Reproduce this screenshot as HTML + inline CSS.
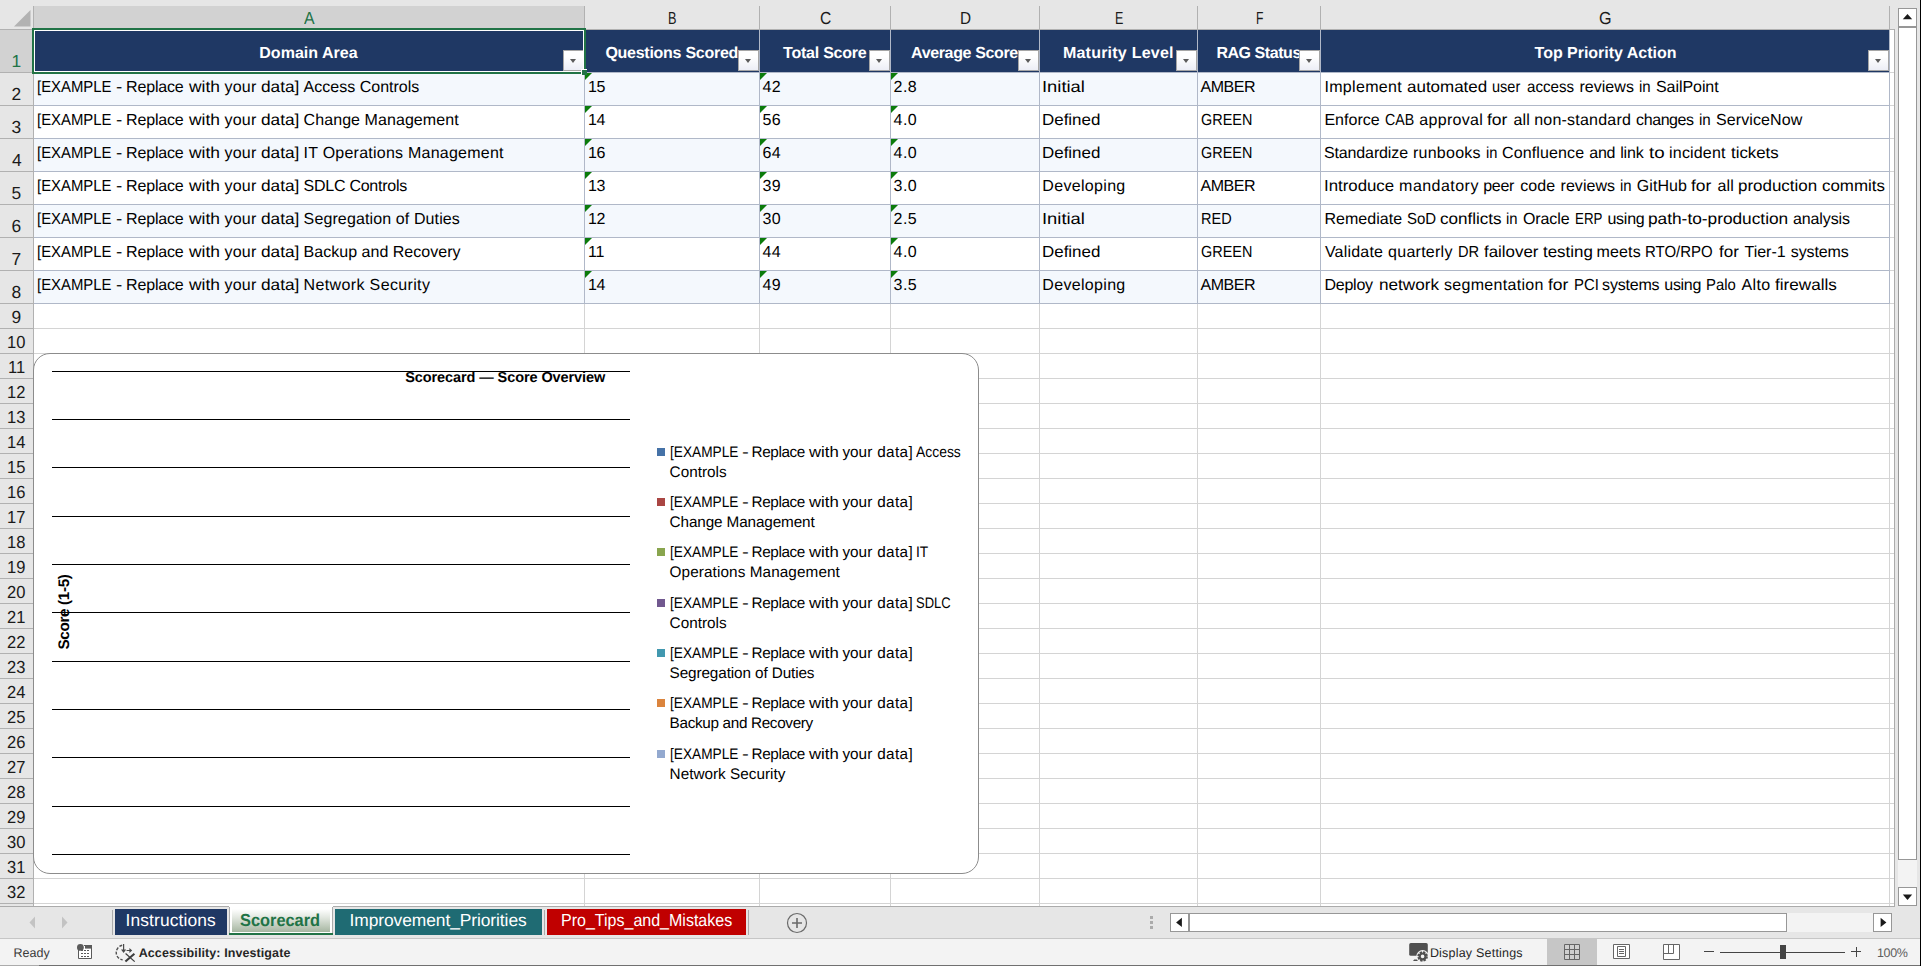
<!DOCTYPE html>
<html lang="en"><head><meta charset="utf-8"><title>Scorecard</title>
<style>
*{margin:0;padding:0}
html,body{width:1921px;height:966px;overflow:hidden;background:#fff}
body{position:relative;font-family:"Liberation Sans",sans-serif;color:#000;text-rendering:geometricPrecision}
.b{position:absolute}
.t{position:absolute;white-space:nowrap;line-height:20px;height:20px;transform-origin:0 50%}
.sb{position:absolute;background:#fff;border:1px solid #979797}
.fb{position:absolute;width:19px;height:19px;border:1px solid #a6a6a6;background:linear-gradient(#fff 30%,#eceef6)}
.fb i{position:absolute;left:6px;top:8px;border:3.5px solid transparent;border-top:4px solid #5c5c5c;border-bottom:0;width:0;height:0}
.tri{position:absolute;width:0;height:0;border-top:7px solid #0b7b0b;border-right:7px solid transparent}
</style></head>
<body>
<!-- sheet grid -->
<div class="b" style="left:0px;top:0px;width:1921px;height:30px;background:#e6e6e6;"></div>
<div class="b" style="left:0px;top:30px;width:34px;height:876px;background:#e6e6e6;"></div>
<div class="b" style="left:1895px;top:30px;width:26px;height:877px;background:#e6e6e6;"></div>
<div class="b" style="left:34px;top:6px;width:550px;height:23px;background:#d2d2d2;"></div>
<div class="b" style="left:0px;top:30px;width:33px;height:42px;background:#d2d2d2;"></div>
<div class="b" style="left:34px;top:72px;width:1860px;height:1px;background:#d4d4d4;"></div>
<div class="b" style="left:34px;top:105px;width:1860px;height:1px;background:#d4d4d4;"></div>
<div class="b" style="left:34px;top:138px;width:1860px;height:1px;background:#d4d4d4;"></div>
<div class="b" style="left:34px;top:171px;width:1860px;height:1px;background:#d4d4d4;"></div>
<div class="b" style="left:34px;top:204px;width:1860px;height:1px;background:#d4d4d4;"></div>
<div class="b" style="left:34px;top:237px;width:1860px;height:1px;background:#d4d4d4;"></div>
<div class="b" style="left:34px;top:270px;width:1860px;height:1px;background:#d4d4d4;"></div>
<div class="b" style="left:34px;top:303px;width:1860px;height:1px;background:#d4d4d4;"></div>
<div class="b" style="left:34px;top:328px;width:1860px;height:1px;background:#d4d4d4;"></div>
<div class="b" style="left:34px;top:353px;width:1860px;height:1px;background:#d4d4d4;"></div>
<div class="b" style="left:34px;top:378px;width:1860px;height:1px;background:#d4d4d4;"></div>
<div class="b" style="left:34px;top:403px;width:1860px;height:1px;background:#d4d4d4;"></div>
<div class="b" style="left:34px;top:428px;width:1860px;height:1px;background:#d4d4d4;"></div>
<div class="b" style="left:34px;top:453px;width:1860px;height:1px;background:#d4d4d4;"></div>
<div class="b" style="left:34px;top:478px;width:1860px;height:1px;background:#d4d4d4;"></div>
<div class="b" style="left:34px;top:503px;width:1860px;height:1px;background:#d4d4d4;"></div>
<div class="b" style="left:34px;top:528px;width:1860px;height:1px;background:#d4d4d4;"></div>
<div class="b" style="left:34px;top:553px;width:1860px;height:1px;background:#d4d4d4;"></div>
<div class="b" style="left:34px;top:578px;width:1860px;height:1px;background:#d4d4d4;"></div>
<div class="b" style="left:34px;top:603px;width:1860px;height:1px;background:#d4d4d4;"></div>
<div class="b" style="left:34px;top:628px;width:1860px;height:1px;background:#d4d4d4;"></div>
<div class="b" style="left:34px;top:653px;width:1860px;height:1px;background:#d4d4d4;"></div>
<div class="b" style="left:34px;top:678px;width:1860px;height:1px;background:#d4d4d4;"></div>
<div class="b" style="left:34px;top:703px;width:1860px;height:1px;background:#d4d4d4;"></div>
<div class="b" style="left:34px;top:728px;width:1860px;height:1px;background:#d4d4d4;"></div>
<div class="b" style="left:34px;top:753px;width:1860px;height:1px;background:#d4d4d4;"></div>
<div class="b" style="left:34px;top:778px;width:1860px;height:1px;background:#d4d4d4;"></div>
<div class="b" style="left:34px;top:803px;width:1860px;height:1px;background:#d4d4d4;"></div>
<div class="b" style="left:34px;top:828px;width:1860px;height:1px;background:#d4d4d4;"></div>
<div class="b" style="left:34px;top:853px;width:1860px;height:1px;background:#d4d4d4;"></div>
<div class="b" style="left:34px;top:878px;width:1860px;height:1px;background:#d4d4d4;"></div>
<div class="b" style="left:34px;top:903px;width:1860px;height:1px;background:#d4d4d4;"></div>
<div class="b" style="left:584px;top:30px;width:1px;height:876px;background:#d4d4d4;"></div>
<div class="b" style="left:759px;top:30px;width:1px;height:876px;background:#d4d4d4;"></div>
<div class="b" style="left:890px;top:30px;width:1px;height:876px;background:#d4d4d4;"></div>
<div class="b" style="left:1039px;top:30px;width:1px;height:876px;background:#d4d4d4;"></div>
<div class="b" style="left:1197px;top:30px;width:1px;height:876px;background:#d4d4d4;"></div>
<div class="b" style="left:1320px;top:30px;width:1px;height:876px;background:#d4d4d4;"></div>
<div class="b" style="left:1889px;top:30px;width:1px;height:876px;background:#d4d4d4;"></div>
<!-- table -->
<div class="b" style="left:34px;top:30px;width:1855px;height:42px;background:#1f3864;"></div>
<div class="b" style="left:34px;top:73px;width:1286px;height:32px;background:#f4f8fd;"></div>
<div class="b" style="left:34px;top:139px;width:1286px;height:32px;background:#f4f8fd;"></div>
<div class="b" style="left:34px;top:205px;width:1286px;height:32px;background:#f4f8fd;"></div>
<div class="b" style="left:34px;top:271px;width:1286px;height:32px;background:#f4f8fd;"></div>
<div class="b" style="left:34px;top:72px;width:1856px;height:1px;background:#b0b8c8;"></div>
<div class="b" style="left:34px;top:105px;width:1856px;height:1px;background:#b0b8c8;"></div>
<div class="b" style="left:34px;top:138px;width:1856px;height:1px;background:#b0b8c8;"></div>
<div class="b" style="left:34px;top:171px;width:1856px;height:1px;background:#b0b8c8;"></div>
<div class="b" style="left:34px;top:204px;width:1856px;height:1px;background:#b0b8c8;"></div>
<div class="b" style="left:34px;top:237px;width:1856px;height:1px;background:#b0b8c8;"></div>
<div class="b" style="left:34px;top:270px;width:1856px;height:1px;background:#b0b8c8;"></div>
<div class="b" style="left:34px;top:303px;width:1856px;height:1px;background:#b0b8c8;"></div>
<div class="b" style="left:584px;top:30px;width:1px;height:274px;background:#b0b8c8;"></div>
<div class="b" style="left:759px;top:30px;width:1px;height:274px;background:#b0b8c8;"></div>
<div class="b" style="left:890px;top:30px;width:1px;height:274px;background:#b0b8c8;"></div>
<div class="b" style="left:1039px;top:30px;width:1px;height:274px;background:#b0b8c8;"></div>
<div class="b" style="left:1197px;top:30px;width:1px;height:274px;background:#b0b8c8;"></div>
<div class="b" style="left:1320px;top:30px;width:1px;height:274px;background:#b0b8c8;"></div>
<div class="b" style="left:1889px;top:30px;width:1px;height:274px;background:#b0b8c8;"></div>
<div class="t" style="left:259.25px;top:44.00px;font-size:16px;color:#fff;font-weight:bold;letter-spacing:0.030px;">Domain Area</div>
<div class="t" style="left:605.40px;top:44.00px;font-size:16px;color:#fff;font-weight:bold;letter-spacing:-0.267px;">Questions Scored</div>
<div class="t" style="left:783.05px;top:44.00px;font-size:16px;color:#fff;font-weight:bold;letter-spacing:-0.230px;">Total Score</div>
<div class="t" style="left:911.10px;top:44.00px;font-size:16px;color:#fff;font-weight:bold;letter-spacing:-0.367px;">Average Score</div>
<div class="t" style="left:1062.90px;top:44.00px;font-size:16px;color:#fff;font-weight:bold;letter-spacing:0.231px;">Maturity Level</div>
<div class="t" style="left:1216.40px;top:44.00px;font-size:16px;color:#fff;font-weight:bold;letter-spacing:-0.444px;">RAG Status</div>
<div class="t" style="left:1534.60px;top:44.00px;font-size:16px;color:#fff;font-weight:bold;letter-spacing:-0.022px;">Top Priority Action</div>
<div class="fb" style="left:563px;top:50px"><i></i></div>
<div class="fb" style="left:738px;top:50px"><i></i></div>
<div class="fb" style="left:869px;top:50px"><i></i></div>
<div class="fb" style="left:1018px;top:50px"><i></i></div>
<div class="fb" style="left:1176px;top:50px"><i></i></div>
<div class="fb" style="left:1299px;top:50px"><i></i></div>
<div class="fb" style="left:1868px;top:50px"><i></i></div>
<div class="t" style="left:37.17px;top:78.00px;font-size:16px;transform:scaleX(0.9308);">[EXAMPLE</div>
<div class="t" style="left:115.53px;top:78.00px;font-size:16px;transform:scaleX(1.1750);">-</div>
<div class="t" style="left:126.10px;top:78.00px;font-size:16px;letter-spacing:-0.183px;">Replace</div>
<div class="t" style="left:188.50px;top:78.00px;font-size:16px;transform:scaleX(1.0893);">with</div>
<div class="t" style="left:224.50px;top:78.00px;font-size:16px;letter-spacing:0.200px;">your</div>
<div class="t" style="left:260.52px;top:78.00px;font-size:16px;transform:scaleX(1.0794);">data]</div>
<div class="t" style="left:303.60px;top:78.00px;font-size:16px;letter-spacing:0.011px;">Access Controls</div>
<div class="t" style="left:588.00px;top:78.00px;font-size:16px;letter-spacing:-0.300px;">15</div>
<div class="t" style="left:762.40px;top:78.00px;font-size:16px;letter-spacing:0.450px;">42</div>
<div class="t" style="left:893.60px;top:78.00px;font-size:16px;letter-spacing:0.450px;">2.8</div>
<div class="t" style="left:1042.30px;top:78.00px;font-size:16px;transform:scaleX(1.1486);">Initial</div>
<div class="t" style="left:1200.60px;top:78.00px;font-size:16px;letter-spacing:-0.500px;">AMBER</div>
<div class="t" style="left:1324.38px;top:78.00px;font-size:16px;letter-spacing:0.327px;">Implement</div>
<div class="t" style="left:1407.24px;top:78.00px;font-size:16px;transform:scaleX(1.0608);">automated</div>
<div class="t" style="left:1492.39px;top:78.00px;font-size:16px;transform:scaleX(0.9067);">user</div>
<div class="t" style="left:1527.45px;top:78.00px;font-size:16px;transform:scaleX(0.9458);">access</div>
<div class="t" style="left:1579.40px;top:78.00px;font-size:16px;letter-spacing:0.050px;">reviews</div>
<div class="t" style="left:1639.46px;top:78.00px;font-size:16px;transform:scaleX(0.9364);">in</div>
<div class="t" style="left:1656.00px;top:78.00px;font-size:16px;letter-spacing:-0.062px;">SailPoint</div>
<div class="tri" style="left:585px;top:73px"></div>
<div class="tri" style="left:760px;top:73px"></div>
<div class="tri" style="left:891px;top:73px"></div>
<div class="t" style="left:37.17px;top:111.00px;font-size:16px;transform:scaleX(0.9308);">[EXAMPLE</div>
<div class="t" style="left:115.53px;top:111.00px;font-size:16px;transform:scaleX(1.1750);">-</div>
<div class="t" style="left:126.10px;top:111.00px;font-size:16px;letter-spacing:-0.183px;">Replace</div>
<div class="t" style="left:188.50px;top:111.00px;font-size:16px;transform:scaleX(1.0893);">with</div>
<div class="t" style="left:224.50px;top:111.00px;font-size:16px;letter-spacing:0.200px;">your</div>
<div class="t" style="left:260.52px;top:111.00px;font-size:16px;transform:scaleX(1.0794);">data]</div>
<div class="t" style="left:303.60px;top:111.00px;font-size:16px;letter-spacing:0.072px;">Change Management</div>
<div class="t" style="left:588.00px;top:111.00px;font-size:16px;letter-spacing:-0.300px;">14</div>
<div class="t" style="left:762.40px;top:111.00px;font-size:16px;letter-spacing:0.450px;">56</div>
<div class="t" style="left:893.60px;top:111.00px;font-size:16px;letter-spacing:0.450px;">4.0</div>
<div class="t" style="left:1042.30px;top:111.00px;font-size:16px;transform:scaleX(1.0585);">Defined</div>
<div class="t" style="left:1200.60px;top:111.00px;font-size:16px;transform:scaleX(0.9018);">GREEN</div>
<div class="t" style="left:1324.40px;top:111.00px;font-size:16px;letter-spacing:0.033px;">Enforce</div>
<div class="t" style="left:1385.21px;top:111.00px;font-size:16px;transform:scaleX(0.8871);">CAB</div>
<div class="t" style="left:1419.30px;top:111.00px;font-size:16px;letter-spacing:0.314px;">approval</div>
<div class="t" style="left:1487.21px;top:111.00px;font-size:16px;transform:scaleX(1.0941);">for</div>
<div class="t" style="left:1513.40px;top:111.00px;font-size:16px;letter-spacing:0.200px;">all</div>
<div class="t" style="left:1534.20px;top:111.00px;font-size:16px;letter-spacing:0.218px;">non-standard</div>
<div class="t" style="left:1636.10px;top:111.00px;font-size:16px;letter-spacing:-0.417px;">changes</div>
<div class="t" style="left:1699.35px;top:111.00px;font-size:16px;transform:scaleX(0.9455);">in</div>
<div class="t" style="left:1715.90px;top:111.00px;font-size:16px;letter-spacing:0.122px;">ServiceNow</div>
<div class="tri" style="left:585px;top:106px"></div>
<div class="tri" style="left:760px;top:106px"></div>
<div class="tri" style="left:891px;top:106px"></div>
<div class="t" style="left:37.17px;top:144.00px;font-size:16px;transform:scaleX(0.9308);">[EXAMPLE</div>
<div class="t" style="left:115.53px;top:144.00px;font-size:16px;transform:scaleX(1.1750);">-</div>
<div class="t" style="left:126.10px;top:144.00px;font-size:16px;letter-spacing:-0.183px;">Replace</div>
<div class="t" style="left:188.50px;top:144.00px;font-size:16px;transform:scaleX(1.0893);">with</div>
<div class="t" style="left:224.50px;top:144.00px;font-size:16px;letter-spacing:0.200px;">your</div>
<div class="t" style="left:260.52px;top:144.00px;font-size:16px;transform:scaleX(1.0794);">data]</div>
<div class="t" style="left:303.60px;top:144.00px;font-size:16px;letter-spacing:0.235px;">IT Operations Management</div>
<div class="t" style="left:588.00px;top:144.00px;font-size:16px;letter-spacing:-0.300px;">16</div>
<div class="t" style="left:762.40px;top:144.00px;font-size:16px;letter-spacing:0.450px;">64</div>
<div class="t" style="left:893.60px;top:144.00px;font-size:16px;letter-spacing:0.450px;">4.0</div>
<div class="t" style="left:1042.30px;top:144.00px;font-size:16px;transform:scaleX(1.0585);">Defined</div>
<div class="t" style="left:1200.60px;top:144.00px;font-size:16px;transform:scaleX(0.9018);">GREEN</div>
<div class="t" style="left:1323.90px;top:144.00px;font-size:16px;letter-spacing:-0.120px;">Standardize</div>
<div class="t" style="left:1413.00px;top:144.00px;font-size:16px;letter-spacing:0.243px;">runbooks</div>
<div class="t" style="left:1485.58px;top:144.00px;font-size:16px;transform:scaleX(0.9182);">in</div>
<div class="t" style="left:1502.10px;top:144.00px;font-size:16px;letter-spacing:0.111px;">Confluence</div>
<div class="t" style="left:1589.30px;top:144.00px;font-size:16px;letter-spacing:-0.250px;">and</div>
<div class="t" style="left:1620.20px;top:144.00px;font-size:16px;letter-spacing:-0.133px;">link</div>
<div class="t" style="left:1648.73px;top:144.00px;font-size:16px;transform:scaleX(1.1667);">to</div>
<div class="t" style="left:1669.10px;top:144.00px;font-size:16px;letter-spacing:0.171px;">incident</div>
<div class="t" style="left:1730.95px;top:144.00px;font-size:16px;transform:scaleX(1.0523);">tickets</div>
<div class="tri" style="left:585px;top:139px"></div>
<div class="tri" style="left:760px;top:139px"></div>
<div class="tri" style="left:891px;top:139px"></div>
<div class="t" style="left:37.17px;top:177.00px;font-size:16px;transform:scaleX(0.9308);">[EXAMPLE</div>
<div class="t" style="left:115.53px;top:177.00px;font-size:16px;transform:scaleX(1.1750);">-</div>
<div class="t" style="left:126.10px;top:177.00px;font-size:16px;letter-spacing:-0.183px;">Replace</div>
<div class="t" style="left:188.50px;top:177.00px;font-size:16px;transform:scaleX(1.0893);">with</div>
<div class="t" style="left:224.50px;top:177.00px;font-size:16px;letter-spacing:0.200px;">your</div>
<div class="t" style="left:260.52px;top:177.00px;font-size:16px;transform:scaleX(1.0794);">data]</div>
<div class="t" style="left:303.60px;top:177.00px;font-size:16px;letter-spacing:-0.258px;">SDLC Controls</div>
<div class="t" style="left:588.00px;top:177.00px;font-size:16px;letter-spacing:-0.300px;">13</div>
<div class="t" style="left:762.40px;top:177.00px;font-size:16px;letter-spacing:0.450px;">39</div>
<div class="t" style="left:893.60px;top:177.00px;font-size:16px;letter-spacing:0.450px;">3.0</div>
<div class="t" style="left:1042.30px;top:177.00px;font-size:16px;letter-spacing:0.322px;">Developing</div>
<div class="t" style="left:1200.60px;top:177.00px;font-size:16px;letter-spacing:-0.500px;">AMBER</div>
<div class="t" style="left:1324.35px;top:177.00px;font-size:16px;transform:scaleX(1.0508);">Introduce</div>
<div class="t" style="left:1399.10px;top:177.00px;font-size:16px;letter-spacing:0.462px;">mandatory</div>
<div class="t" style="left:1483.20px;top:177.00px;font-size:16px;letter-spacing:-0.267px;">peer</div>
<div class="t" style="left:1520.20px;top:177.00px;font-size:16px;letter-spacing:0.100px;">code</div>
<div class="t" style="left:1560.50px;top:177.00px;font-size:16px;letter-spacing:0.050px;">reviews</div>
<div class="t" style="left:1620.27px;top:177.00px;font-size:16px;transform:scaleX(0.9273);">in</div>
<div class="t" style="left:1636.80px;top:177.00px;font-size:16px;letter-spacing:0.060px;">GitHub</div>
<div class="t" style="left:1691.41px;top:177.00px;font-size:16px;transform:scaleX(1.0882);">for</div>
<div class="t" style="left:1717.50px;top:177.00px;font-size:16px;letter-spacing:0.200px;">all</div>
<div class="t" style="left:1738.24px;top:177.00px;font-size:16px;transform:scaleX(1.0589);">production</div>
<div class="t" style="left:1822.04px;top:177.00px;font-size:16px;transform:scaleX(1.0552);">commits</div>
<div class="tri" style="left:585px;top:172px"></div>
<div class="tri" style="left:760px;top:172px"></div>
<div class="tri" style="left:891px;top:172px"></div>
<div class="t" style="left:37.17px;top:210.00px;font-size:16px;transform:scaleX(0.9308);">[EXAMPLE</div>
<div class="t" style="left:115.53px;top:210.00px;font-size:16px;transform:scaleX(1.1750);">-</div>
<div class="t" style="left:126.10px;top:210.00px;font-size:16px;letter-spacing:-0.183px;">Replace</div>
<div class="t" style="left:188.50px;top:210.00px;font-size:16px;transform:scaleX(1.0893);">with</div>
<div class="t" style="left:224.50px;top:210.00px;font-size:16px;letter-spacing:0.200px;">your</div>
<div class="t" style="left:260.52px;top:210.00px;font-size:16px;transform:scaleX(1.0794);">data]</div>
<div class="t" style="left:303.60px;top:210.00px;font-size:16px;letter-spacing:0.120px;">Segregation of Duties</div>
<div class="t" style="left:588.00px;top:210.00px;font-size:16px;letter-spacing:-0.300px;">12</div>
<div class="t" style="left:762.40px;top:210.00px;font-size:16px;letter-spacing:0.450px;">30</div>
<div class="t" style="left:893.60px;top:210.00px;font-size:16px;letter-spacing:0.450px;">2.5</div>
<div class="t" style="left:1042.30px;top:210.00px;font-size:16px;transform:scaleX(1.1486);">Initial</div>
<div class="t" style="left:1200.60px;top:210.00px;font-size:16px;transform:scaleX(0.9062);">RED</div>
<div class="t" style="left:1324.40px;top:210.00px;font-size:16px;letter-spacing:0.037px;">Remediate</div>
<div class="t" style="left:1407.06px;top:210.00px;font-size:16px;transform:scaleX(0.9379);">SoD</div>
<div class="t" style="left:1440.13px;top:210.00px;font-size:16px;transform:scaleX(1.0661);">conflicts</div>
<div class="t" style="left:1506.37px;top:210.00px;font-size:16px;transform:scaleX(0.9273);">in</div>
<div class="t" style="left:1522.90px;top:210.00px;font-size:16px;letter-spacing:-0.080px;">Oracle</div>
<div class="t" style="left:1575.17px;top:210.00px;font-size:16px;transform:scaleX(0.8323);">ERP</div>
<div class="t" style="left:1607.40px;top:210.00px;font-size:16px;letter-spacing:-0.225px;">using</div>
<div class="t" style="left:1648.42px;top:210.00px;font-size:16px;transform:scaleX(1.0797);">path-to-production</div>
<div class="t" style="left:1793.10px;top:210.00px;font-size:16px;letter-spacing:-0.143px;">analysis</div>
<div class="tri" style="left:585px;top:205px"></div>
<div class="tri" style="left:760px;top:205px"></div>
<div class="tri" style="left:891px;top:205px"></div>
<div class="t" style="left:37.17px;top:243.00px;font-size:16px;transform:scaleX(0.9308);">[EXAMPLE</div>
<div class="t" style="left:115.53px;top:243.00px;font-size:16px;transform:scaleX(1.1750);">-</div>
<div class="t" style="left:126.10px;top:243.00px;font-size:16px;letter-spacing:-0.183px;">Replace</div>
<div class="t" style="left:188.50px;top:243.00px;font-size:16px;transform:scaleX(1.0893);">with</div>
<div class="t" style="left:224.50px;top:243.00px;font-size:16px;letter-spacing:0.200px;">your</div>
<div class="t" style="left:260.52px;top:243.00px;font-size:16px;transform:scaleX(1.0794);">data]</div>
<div class="t" style="left:303.60px;top:243.00px;font-size:16px;letter-spacing:0.022px;">Backup and Recovery</div>
<div class="t" style="left:588.00px;top:243.00px;font-size:16px;letter-spacing:-0.300px;">11</div>
<div class="t" style="left:762.40px;top:243.00px;font-size:16px;letter-spacing:0.450px;">44</div>
<div class="t" style="left:893.60px;top:243.00px;font-size:16px;letter-spacing:0.450px;">4.0</div>
<div class="t" style="left:1042.30px;top:243.00px;font-size:16px;transform:scaleX(1.0585);">Defined</div>
<div class="t" style="left:1200.60px;top:243.00px;font-size:16px;transform:scaleX(0.9018);">GREEN</div>
<div class="t" style="left:1324.90px;top:243.00px;font-size:16px;letter-spacing:0.214px;">Validate</div>
<div class="t" style="left:1388.10px;top:243.00px;font-size:16px;letter-spacing:0.262px;">quarterly</div>
<div class="t" style="left:1458.09px;top:243.00px;font-size:16px;transform:scaleX(0.9143);">DR</div>
<div class="t" style="left:1483.64px;top:243.00px;font-size:16px;transform:scaleX(1.0560);">failover</div>
<div class="t" style="left:1542.74px;top:243.00px;font-size:16px;transform:scaleX(1.0578);">testing</div>
<div class="t" style="left:1596.40px;top:243.00px;font-size:16px;letter-spacing:0.200px;">meets</div>
<div class="t" style="left:1645.46px;top:243.00px;font-size:16px;transform:scaleX(0.9366);">RTO/RPO</div>
<div class="t" style="left:1718.64px;top:243.00px;font-size:16px;transform:scaleX(1.0647);">for</div>
<div class="t" style="left:1744.60px;top:243.00px;font-size:16px;letter-spacing:-0.040px;">Tier-1</div>
<div class="t" style="left:1790.80px;top:243.00px;font-size:16px;letter-spacing:-0.133px;">systems</div>
<div class="tri" style="left:585px;top:238px"></div>
<div class="tri" style="left:760px;top:238px"></div>
<div class="tri" style="left:891px;top:238px"></div>
<div class="t" style="left:37.17px;top:276.00px;font-size:16px;transform:scaleX(0.9308);">[EXAMPLE</div>
<div class="t" style="left:115.53px;top:276.00px;font-size:16px;transform:scaleX(1.1750);">-</div>
<div class="t" style="left:126.10px;top:276.00px;font-size:16px;letter-spacing:-0.183px;">Replace</div>
<div class="t" style="left:188.50px;top:276.00px;font-size:16px;transform:scaleX(1.0893);">with</div>
<div class="t" style="left:224.50px;top:276.00px;font-size:16px;letter-spacing:0.200px;">your</div>
<div class="t" style="left:260.52px;top:276.00px;font-size:16px;transform:scaleX(1.0794);">data]</div>
<div class="t" style="left:303.60px;top:276.00px;font-size:16px;letter-spacing:0.360px;">Network Security</div>
<div class="t" style="left:588.00px;top:276.00px;font-size:16px;letter-spacing:-0.300px;">14</div>
<div class="t" style="left:762.40px;top:276.00px;font-size:16px;letter-spacing:0.450px;">49</div>
<div class="t" style="left:893.60px;top:276.00px;font-size:16px;letter-spacing:0.450px;">3.5</div>
<div class="t" style="left:1042.30px;top:276.00px;font-size:16px;letter-spacing:0.322px;">Developing</div>
<div class="t" style="left:1200.60px;top:276.00px;font-size:16px;letter-spacing:-0.500px;">AMBER</div>
<div class="t" style="left:1324.40px;top:276.00px;font-size:16px;letter-spacing:-0.220px;">Deploy</div>
<div class="t" style="left:1378.93px;top:276.00px;font-size:16px;transform:scaleX(1.0727);">network</div>
<div class="t" style="left:1443.90px;top:276.00px;font-size:16px;letter-spacing:0.318px;">segmentation</div>
<div class="t" style="left:1548.01px;top:276.00px;font-size:16px;transform:scaleX(1.0941);">for</div>
<div class="t" style="left:1574.27px;top:276.00px;font-size:16px;transform:scaleX(0.9292);">PCI</div>
<div class="t" style="left:1602.10px;top:276.00px;font-size:16px;letter-spacing:-0.200px;">systems</div>
<div class="t" style="left:1664.30px;top:276.00px;font-size:16px;letter-spacing:-0.300px;">using</div>
<div class="t" style="left:1705.87px;top:276.00px;font-size:16px;transform:scaleX(0.9290);">Palo</div>
<div class="t" style="left:1741.60px;top:276.00px;font-size:16px;letter-spacing:0.300px;">Alto</div>
<div class="t" style="left:1774.93px;top:276.00px;font-size:16px;transform:scaleX(1.0714);">firewalls</div>
<div class="tri" style="left:585px;top:271px"></div>
<div class="tri" style="left:760px;top:271px"></div>
<div class="tri" style="left:891px;top:271px"></div>
<!-- headers -->
<div class="t" style="left:304.05px;top:8.00px;font-size:17.4px;color:#217346;transform:scaleX(0.9125);">A</div>
<div class="t" style="left:667.67px;top:8.00px;font-size:17.4px;color:#1a1a1a;transform:scaleX(0.7300);">B</div>
<div class="t" style="left:819.70px;top:8.00px;font-size:17.4px;color:#1a1a1a;transform:scaleX(0.9000);">C</div>
<div class="t" style="left:959.52px;top:8.00px;font-size:17.4px;color:#1a1a1a;transform:scaleX(0.8818);">D</div>
<div class="t" style="left:1114.58px;top:8.00px;font-size:17.4px;color:#1a1a1a;transform:scaleX(0.7200);">E</div>
<div class="t" style="left:1255.60px;top:8.00px;font-size:17.4px;color:#1a1a1a;transform:scaleX(0.7000);">F</div>
<div class="t" style="left:1598.97px;top:8.00px;font-size:17.4px;color:#1a1a1a;transform:scaleX(0.9273);">G</div>
<div class="b" style="left:33px;top:6px;width:1px;height:24px;background:#b1b1b1;"></div>
<div class="b" style="left:584px;top:6px;width:1px;height:24px;background:#b1b1b1;"></div>
<div class="b" style="left:759px;top:6px;width:1px;height:24px;background:#b1b1b1;"></div>
<div class="b" style="left:890px;top:6px;width:1px;height:24px;background:#b1b1b1;"></div>
<div class="b" style="left:1039px;top:6px;width:1px;height:24px;background:#b1b1b1;"></div>
<div class="b" style="left:1197px;top:6px;width:1px;height:24px;background:#b1b1b1;"></div>
<div class="b" style="left:1320px;top:6px;width:1px;height:24px;background:#b1b1b1;"></div>
<div class="b" style="left:1889px;top:6px;width:1px;height:24px;background:#b1b1b1;"></div>
<div class="b" style="left:0px;top:29px;width:1895px;height:1px;background:#b1b1b1;"></div>
<div class="b" style="left:33px;top:30px;width:1px;height:876px;background:#b1b1b1;"></div>
<div class="b" style="left:0px;top:72px;width:33px;height:1px;background:#b1b1b1;"></div>
<div class="t" style="left:11.50px;top:51.00px;font-size:17.4px;color:#217346;">1</div>
<div class="b" style="left:0px;top:105px;width:33px;height:1px;background:#b1b1b1;"></div>
<div class="t" style="left:11.50px;top:84.00px;font-size:17.4px;color:#1a1a1a;">2</div>
<div class="b" style="left:0px;top:138px;width:33px;height:1px;background:#b1b1b1;"></div>
<div class="t" style="left:11.50px;top:117.00px;font-size:17.4px;color:#1a1a1a;">3</div>
<div class="b" style="left:0px;top:171px;width:33px;height:1px;background:#b1b1b1;"></div>
<div class="t" style="left:12.00px;top:150.00px;font-size:17.4px;color:#1a1a1a;">4</div>
<div class="b" style="left:0px;top:204px;width:33px;height:1px;background:#b1b1b1;"></div>
<div class="t" style="left:11.50px;top:183.00px;font-size:17.4px;color:#1a1a1a;">5</div>
<div class="b" style="left:0px;top:237px;width:33px;height:1px;background:#b1b1b1;"></div>
<div class="t" style="left:11.50px;top:216.00px;font-size:17.4px;color:#1a1a1a;">6</div>
<div class="b" style="left:0px;top:270px;width:33px;height:1px;background:#b1b1b1;"></div>
<div class="t" style="left:11.50px;top:249.00px;font-size:17.4px;color:#1a1a1a;">7</div>
<div class="b" style="left:0px;top:303px;width:33px;height:1px;background:#b1b1b1;"></div>
<div class="t" style="left:11.50px;top:282.00px;font-size:17.4px;color:#1a1a1a;">8</div>
<div class="b" style="left:0px;top:328px;width:33px;height:1px;background:#b1b1b1;"></div>
<div class="t" style="left:11.50px;top:307.00px;font-size:17.4px;color:#1a1a1a;">9</div>
<div class="b" style="left:0px;top:353px;width:33px;height:1px;background:#b1b1b1;"></div>
<div class="t" style="left:7.35px;top:332.00px;font-size:17.4px;color:#1a1a1a;transform:scaleX(0.9500);">10</div>
<div class="b" style="left:0px;top:378px;width:33px;height:1px;background:#b1b1b1;"></div>
<div class="t" style="left:7.83px;top:357.00px;font-size:17.4px;color:#1a1a1a;transform:scaleX(0.9500);">11</div>
<div class="b" style="left:0px;top:403px;width:33px;height:1px;background:#b1b1b1;"></div>
<div class="t" style="left:7.35px;top:382.00px;font-size:17.4px;color:#1a1a1a;transform:scaleX(0.9500);">12</div>
<div class="b" style="left:0px;top:428px;width:33px;height:1px;background:#b1b1b1;"></div>
<div class="t" style="left:7.35px;top:407.00px;font-size:17.4px;color:#1a1a1a;transform:scaleX(0.9500);">13</div>
<div class="b" style="left:0px;top:453px;width:33px;height:1px;background:#b1b1b1;"></div>
<div class="t" style="left:7.35px;top:432.00px;font-size:17.4px;color:#1a1a1a;transform:scaleX(0.9500);">14</div>
<div class="b" style="left:0px;top:478px;width:33px;height:1px;background:#b1b1b1;"></div>
<div class="t" style="left:7.35px;top:457.00px;font-size:17.4px;color:#1a1a1a;transform:scaleX(0.9500);">15</div>
<div class="b" style="left:0px;top:503px;width:33px;height:1px;background:#b1b1b1;"></div>
<div class="t" style="left:7.35px;top:482.00px;font-size:17.4px;color:#1a1a1a;transform:scaleX(0.9500);">16</div>
<div class="b" style="left:0px;top:528px;width:33px;height:1px;background:#b1b1b1;"></div>
<div class="t" style="left:7.35px;top:507.00px;font-size:17.4px;color:#1a1a1a;transform:scaleX(0.9500);">17</div>
<div class="b" style="left:0px;top:553px;width:33px;height:1px;background:#b1b1b1;"></div>
<div class="t" style="left:7.35px;top:532.00px;font-size:17.4px;color:#1a1a1a;transform:scaleX(0.9500);">18</div>
<div class="b" style="left:0px;top:578px;width:33px;height:1px;background:#b1b1b1;"></div>
<div class="t" style="left:7.35px;top:557.00px;font-size:17.4px;color:#1a1a1a;transform:scaleX(0.9500);">19</div>
<div class="b" style="left:0px;top:603px;width:33px;height:1px;background:#b1b1b1;"></div>
<div class="t" style="left:7.35px;top:582.00px;font-size:17.4px;color:#1a1a1a;transform:scaleX(0.9500);">20</div>
<div class="b" style="left:0px;top:628px;width:33px;height:1px;background:#b1b1b1;"></div>
<div class="t" style="left:7.35px;top:607.00px;font-size:17.4px;color:#1a1a1a;transform:scaleX(0.9500);">21</div>
<div class="b" style="left:0px;top:653px;width:33px;height:1px;background:#b1b1b1;"></div>
<div class="t" style="left:7.35px;top:632.00px;font-size:17.4px;color:#1a1a1a;transform:scaleX(0.9500);">22</div>
<div class="b" style="left:0px;top:678px;width:33px;height:1px;background:#b1b1b1;"></div>
<div class="t" style="left:7.35px;top:657.00px;font-size:17.4px;color:#1a1a1a;transform:scaleX(0.9500);">23</div>
<div class="b" style="left:0px;top:703px;width:33px;height:1px;background:#b1b1b1;"></div>
<div class="t" style="left:7.35px;top:682.00px;font-size:17.4px;color:#1a1a1a;transform:scaleX(0.9500);">24</div>
<div class="b" style="left:0px;top:728px;width:33px;height:1px;background:#b1b1b1;"></div>
<div class="t" style="left:7.35px;top:707.00px;font-size:17.4px;color:#1a1a1a;transform:scaleX(0.9500);">25</div>
<div class="b" style="left:0px;top:753px;width:33px;height:1px;background:#b1b1b1;"></div>
<div class="t" style="left:7.35px;top:732.00px;font-size:17.4px;color:#1a1a1a;transform:scaleX(0.9500);">26</div>
<div class="b" style="left:0px;top:778px;width:33px;height:1px;background:#b1b1b1;"></div>
<div class="t" style="left:7.35px;top:757.00px;font-size:17.4px;color:#1a1a1a;transform:scaleX(0.9500);">27</div>
<div class="b" style="left:0px;top:803px;width:33px;height:1px;background:#b1b1b1;"></div>
<div class="t" style="left:7.35px;top:782.00px;font-size:17.4px;color:#1a1a1a;transform:scaleX(0.9500);">28</div>
<div class="b" style="left:0px;top:828px;width:33px;height:1px;background:#b1b1b1;"></div>
<div class="t" style="left:7.35px;top:807.00px;font-size:17.4px;color:#1a1a1a;transform:scaleX(0.9500);">29</div>
<div class="b" style="left:0px;top:853px;width:33px;height:1px;background:#b1b1b1;"></div>
<div class="t" style="left:7.35px;top:832.00px;font-size:17.4px;color:#1a1a1a;transform:scaleX(0.9500);">30</div>
<div class="b" style="left:0px;top:878px;width:33px;height:1px;background:#b1b1b1;"></div>
<div class="t" style="left:7.35px;top:857.00px;font-size:17.4px;color:#1a1a1a;transform:scaleX(0.9500);">31</div>
<div class="b" style="left:0px;top:903px;width:33px;height:1px;background:#b1b1b1;"></div>
<div class="t" style="left:7.35px;top:882.00px;font-size:17.4px;color:#1a1a1a;transform:scaleX(0.9500);">32</div>
<svg class="b" style="left:14px;top:10px" width="17" height="17"><path d="M16.5 0V16.5H0Z" fill="#b2b2b2"/></svg>
<div class="b" style="left:1894px;top:29px;width:1px;height:877px;background:#ababab;"></div>
<div class="b" style="left:0px;top:906px;width:1895px;height:1px;background:#ababab;"></div>
<div class="b" style="left:32px;top:28px;width:550px;height:42px;border:2px solid #217346;"></div>
<div class="b" style="left:34px;top:30px;width:548px;height:40px;border:1px solid #fff;"></div>
<div class="b" style="left:581px;top:69px;width:6px;height:6px;background:#fff;"></div>
<div class="b" style="left:582px;top:70px;width:5px;height:5px;background:#217346;"></div>
<!-- chart -->
<div class="b" style="left:33px;top:353px;width:944px;height:519px;background:#fff;border:1px solid #8c8c8c;border-radius:17px;"></div>
<div class="b" style="left:52px;top:371px;width:578px;height:1px;background:#000;"></div>
<div class="b" style="left:52px;top:419px;width:578px;height:1px;background:#000;"></div>
<div class="b" style="left:52px;top:467px;width:578px;height:1px;background:#000;"></div>
<div class="b" style="left:52px;top:516px;width:578px;height:1px;background:#000;"></div>
<div class="b" style="left:52px;top:564px;width:578px;height:1px;background:#000;"></div>
<div class="b" style="left:52px;top:612px;width:578px;height:1px;background:#000;"></div>
<div class="b" style="left:52px;top:661px;width:578px;height:1px;background:#000;"></div>
<div class="b" style="left:52px;top:709px;width:578px;height:1px;background:#000;"></div>
<div class="b" style="left:52px;top:757px;width:578px;height:1px;background:#000;"></div>
<div class="b" style="left:52px;top:806px;width:578px;height:1px;background:#000;"></div>
<div class="b" style="left:52px;top:854px;width:578px;height:1px;background:#000;"></div>
<div class="t" style="left:405.20px;top:368.00px;font-size:14.5px;font-weight:bold;letter-spacing:-0.088px;">Scorecard — Score Overview</div>
<div class="t" style="left:0;top:0;font-size:15.3px;font-weight:bold;letter-spacing:-0.35px;transform-origin:0 0;transform:translate(64.5px,649.6px) rotate(-90deg);height:0;line-height:0">Score (1-5)</div>
<div class="b" style="left:657px;top:448px;width:8px;height:8px;background:#4572A7;"></div>
<div class="t" style="left:669.71px;top:443.00px;font-size:15.3px;transform:scaleX(0.8933);">[EXAMPLE</div>
<div class="t" style="left:741.77px;top:443.00px;font-size:15.3px;transform:scaleX(1.3333);">-</div>
<div class="t" style="left:751.60px;top:443.00px;font-size:15.3px;letter-spacing:-0.417px;">Replace</div>
<div class="t" style="left:808.90px;top:443.00px;font-size:15.3px;transform:scaleX(1.0923);">with</div>
<div class="t" style="left:842.40px;top:443.00px;font-size:15.3px;letter-spacing:0.033px;">your</div>
<div class="t" style="left:877.20px;top:443.00px;font-size:15.3px;letter-spacing:0.375px;">data]</div>
<div class="t" style="left:916.20px;top:443.00px;font-size:15.3px;transform:scaleX(0.9082);">Access</div>
<div class="t" style="left:669.60px;top:463.00px;font-size:15.3px;">Controls</div>
<div class="b" style="left:657px;top:498px;width:8px;height:8px;background:#AA4643;"></div>
<div class="t" style="left:669.71px;top:493.00px;font-size:15.3px;transform:scaleX(0.8933);">[EXAMPLE</div>
<div class="t" style="left:741.77px;top:493.00px;font-size:15.3px;transform:scaleX(1.3333);">-</div>
<div class="t" style="left:751.60px;top:493.00px;font-size:15.3px;letter-spacing:-0.417px;">Replace</div>
<div class="t" style="left:808.90px;top:493.00px;font-size:15.3px;transform:scaleX(1.0923);">with</div>
<div class="t" style="left:842.40px;top:493.00px;font-size:15.3px;letter-spacing:0.033px;">your</div>
<div class="t" style="left:877.20px;top:493.00px;font-size:15.3px;letter-spacing:0.375px;">data]</div>
<div class="t" style="left:669.60px;top:513.00px;font-size:15.3px;letter-spacing:-0.125px;">Change Management</div>
<div class="b" style="left:657px;top:548px;width:8px;height:8px;background:#89A54E;"></div>
<div class="t" style="left:669.71px;top:543.00px;font-size:15.3px;transform:scaleX(0.8933);">[EXAMPLE</div>
<div class="t" style="left:741.77px;top:543.00px;font-size:15.3px;transform:scaleX(1.3333);">-</div>
<div class="t" style="left:751.60px;top:543.00px;font-size:15.3px;letter-spacing:-0.417px;">Replace</div>
<div class="t" style="left:808.90px;top:543.00px;font-size:15.3px;transform:scaleX(1.0923);">with</div>
<div class="t" style="left:842.40px;top:543.00px;font-size:15.3px;letter-spacing:0.033px;">your</div>
<div class="t" style="left:877.20px;top:543.00px;font-size:15.3px;letter-spacing:0.375px;">data]</div>
<div class="t" style="left:916.20px;top:543.00px;font-size:15.3px;transform:scaleX(0.9000);">IT</div>
<div class="t" style="left:669.60px;top:563.00px;font-size:15.3px;letter-spacing:0.095px;">Operations Management</div>
<div class="b" style="left:657px;top:599px;width:8px;height:8px;background:#71588F;"></div>
<div class="t" style="left:669.71px;top:594.00px;font-size:15.3px;transform:scaleX(0.8933);">[EXAMPLE</div>
<div class="t" style="left:741.77px;top:594.00px;font-size:15.3px;transform:scaleX(1.3333);">-</div>
<div class="t" style="left:751.60px;top:594.00px;font-size:15.3px;letter-spacing:-0.417px;">Replace</div>
<div class="t" style="left:808.90px;top:594.00px;font-size:15.3px;transform:scaleX(1.0923);">with</div>
<div class="t" style="left:842.40px;top:594.00px;font-size:15.3px;letter-spacing:0.033px;">your</div>
<div class="t" style="left:877.20px;top:594.00px;font-size:15.3px;letter-spacing:0.375px;">data]</div>
<div class="t" style="left:916.20px;top:594.00px;font-size:15.3px;transform:scaleX(0.8487);">SDLC</div>
<div class="t" style="left:669.60px;top:614.00px;font-size:15.3px;">Controls</div>
<div class="b" style="left:657px;top:649px;width:8px;height:8px;background:#4198AF;"></div>
<div class="t" style="left:669.71px;top:644.00px;font-size:15.3px;transform:scaleX(0.8933);">[EXAMPLE</div>
<div class="t" style="left:741.77px;top:644.00px;font-size:15.3px;transform:scaleX(1.3333);">-</div>
<div class="t" style="left:751.60px;top:644.00px;font-size:15.3px;letter-spacing:-0.417px;">Replace</div>
<div class="t" style="left:808.90px;top:644.00px;font-size:15.3px;transform:scaleX(1.0923);">with</div>
<div class="t" style="left:842.40px;top:644.00px;font-size:15.3px;letter-spacing:0.033px;">your</div>
<div class="t" style="left:877.20px;top:644.00px;font-size:15.3px;letter-spacing:0.375px;">data]</div>
<div class="t" style="left:669.60px;top:664.00px;font-size:15.3px;letter-spacing:-0.110px;">Segregation of Duties</div>
<div class="b" style="left:657px;top:699px;width:8px;height:8px;background:#DB843D;"></div>
<div class="t" style="left:669.71px;top:694.00px;font-size:15.3px;transform:scaleX(0.8933);">[EXAMPLE</div>
<div class="t" style="left:741.77px;top:694.00px;font-size:15.3px;transform:scaleX(1.3333);">-</div>
<div class="t" style="left:751.60px;top:694.00px;font-size:15.3px;letter-spacing:-0.417px;">Replace</div>
<div class="t" style="left:808.90px;top:694.00px;font-size:15.3px;transform:scaleX(1.0923);">with</div>
<div class="t" style="left:842.40px;top:694.00px;font-size:15.3px;letter-spacing:0.033px;">your</div>
<div class="t" style="left:877.20px;top:694.00px;font-size:15.3px;letter-spacing:0.375px;">data]</div>
<div class="t" style="left:669.60px;top:714.00px;font-size:15.3px;letter-spacing:-0.333px;">Backup and Recovery</div>
<div class="b" style="left:657px;top:750px;width:8px;height:8px;background:#93A9CF;"></div>
<div class="t" style="left:669.71px;top:745.00px;font-size:15.3px;transform:scaleX(0.8933);">[EXAMPLE</div>
<div class="t" style="left:741.77px;top:745.00px;font-size:15.3px;transform:scaleX(1.3333);">-</div>
<div class="t" style="left:751.60px;top:745.00px;font-size:15.3px;letter-spacing:-0.417px;">Replace</div>
<div class="t" style="left:808.90px;top:745.00px;font-size:15.3px;transform:scaleX(1.0923);">with</div>
<div class="t" style="left:842.40px;top:745.00px;font-size:15.3px;letter-spacing:0.033px;">your</div>
<div class="t" style="left:877.20px;top:745.00px;font-size:15.3px;letter-spacing:0.375px;">data]</div>
<div class="t" style="left:669.60px;top:765.00px;font-size:15.3px;letter-spacing:0.007px;">Network Security</div>
<!-- sheet tabs -->
<div class="b" style="left:0px;top:907px;width:1921px;height:31px;background:#e6e6e6;"></div>
<div class="b" style="left:0px;top:938px;width:1921px;height:1px;background:#c6c6c6;"></div>
<svg class="b" style="left:28px;top:915px" width="44" height="16"><path d="M7 1.5V13.5L1.5 7.5Z" fill="#c3c3c3"/><path d="M34 1.5V13.5L39.5 7.5Z" fill="#c3c3c3"/></svg>
<div class="b" style="left:112px;top:910px;width:1px;height:25px;background:#ababab;"></div>
<div class="b" style="left:115px;top:909px;width:112px;height:26px;background:#1f3864;"></div>
<div class="t" style="left:125.60px;top:910.00px;font-size:17.4px;color:#fff;letter-spacing:0.109px;">Instructions</div>
<div class="b" style="left:229px;top:906px;width:104px;height:28px;background:#fff;"></div>
<div class="b" style="left:232px;top:909px;width:98px;height:23px;background:linear-gradient(#fff 0%,#e3e8e1 35%,#a6b6a1 100%);"></div>
<div class="b" style="left:229px;top:907px;width:1px;height:27px;background:#ababab;"></div>
<div class="b" style="left:332px;top:907px;width:1px;height:27px;background:#ababab;"></div>
<div class="b" style="left:229px;top:933px;width:104px;height:2px;background:#217346;"></div>
<div class="t" style="left:240.46px;top:910.00px;font-size:17.4px;color:#217346;font-weight:bold;transform:scaleX(0.9410);">Scorecard</div>
<div class="b" style="left:335px;top:909px;width:207px;height:26px;background:#1f6b73;"></div>
<div class="t" style="left:349.50px;top:910.00px;font-size:17.4px;color:#fff;letter-spacing:-0.076px;">Improvement_Priorities</div>
<div class="b" style="left:544px;top:910px;width:1px;height:25px;background:#ababab;"></div>
<div class="b" style="left:547px;top:909px;width:199px;height:26px;background:#c00000;"></div>
<div class="t" style="left:561.18px;top:910.00px;font-size:17.4px;color:#fff;transform:scaleX(0.9207);">Pro_Tips_and_Mistakes</div>
<div class="b" style="left:748px;top:910px;width:1px;height:25px;background:#ababab;"></div>
<svg class="b" style="left:786px;top:912px" width="22" height="22"><circle cx="11" cy="11" r="9.5" fill="none" stroke="#6a6a6a" stroke-width="1.2"/><path d="M6 11H16M11 6V16" stroke="#6a6a6a" stroke-width="1.6"/></svg>
<div class="b" style="left:1150px;top:916px;width:3px;height:3px;background:#ababab;"></div>
<div class="b" style="left:1150px;top:921px;width:3px;height:3px;background:#ababab;"></div>
<div class="b" style="left:1150px;top:926px;width:3px;height:3px;background:#ababab;"></div>
<div class="b" style="left:1170px;top:913px;width:722px;height:19px;background:#f3f3f3;"></div>
<div class="sb" style="left:1170px;top:913px;width:17px;height:17px"></div>
<div class="sb" style="left:1189px;top:913px;width:596px;height:17px"></div>
<div class="sb" style="left:1873px;top:913px;width:17px;height:17px"></div>
<svg class="b" style="left:1175px;top:917px" width="8" height="11"><path d="M6.9 0.7V10.1L1.1 5.4Z" fill="#1a1a1a"/></svg>
<svg class="b" style="left:1879px;top:917px" width="8" height="11"><path d="M1.6 0.7V10.1L7.4 5.4Z" fill="#1a1a1a"/></svg>
<div class="b" style="left:1898px;top:8px;width:19px;height:898px;background:#f3f3f3;"></div>
<div class="sb" style="left:1898px;top:8px;width:17px;height:17px"></div>
<div class="sb" style="left:1898px;top:27px;width:17px;height:831px"></div>
<div class="sb" style="left:1898px;top:887px;width:17px;height:17px"></div>
<svg class="b" style="left:1902px;top:13px" width="11" height="7"><path d="M0.8 6.2H10.2L5.5 0.9Z" fill="#1a1a1a"/></svg>
<svg class="b" style="left:1902px;top:894px" width="11" height="7"><path d="M0.8 0.6H10.2L5.5 5.9Z" fill="#1a1a1a"/></svg>
<!-- status bar -->
<div class="b" style="left:0px;top:939px;width:1921px;height:26px;background:#f3f3f3;"></div>
<div class="b" style="left:0px;top:965px;width:1921px;height:1px;background:#707070;"></div>
<div class="b" style="left:0px;top:965px;width:39px;height:1px;background:#ababab;"></div>
<div class="b" style="left:1547px;top:938px;width:50px;height:27px;background:#c6c6c6;"></div>
<div class="b" style="left:1920px;top:0px;width:1px;height:966px;background:#000;"></div>
<div class="t" style="left:13.40px;top:943.00px;font-size:12.5px;color:#3b3b3b;letter-spacing:0.075px;">Ready</div>
<div class="t" style="left:138.70px;top:943.00px;font-size:12.5px;color:#262626;font-weight:bold;letter-spacing:0.092px;">Accessibility: Investigate</div>
<div class="t" style="left:1429.90px;top:943.00px;font-size:12.5px;color:#262626;letter-spacing:0.207px;">Display Settings</div>
<div class="t" style="left:1877.00px;top:943.00px;font-size:12.5px;color:#5e5e5e;letter-spacing:-0.333px;">100%</div>
<svg class="b" style="left:1564px;top:944px" width="16" height="16"><rect x="0.5" y="0.5" width="15" height="15" fill="#d0d0d0"/><path d="M0.5 0.5H15.5V15.5H0.5ZM0.5 5.5H15.5M0.5 10.5H15.5M5.5 0.5V15.5M10.5 0.5V15.5" fill="none" stroke="#666"/></svg>
<svg class="b" style="left:1613px;top:944px" width="18" height="16"><path d="M0.5 0.5H16.5V14.5H0.5Z" fill="#fff" stroke="#666"/><path d="M4.5 2.5H12.5V12.5H4.5Z" fill="none" stroke="#666"/><path d="M6 5.5H11M6 7.5H11M6 9.5H11" stroke="#666"/></svg>
<svg class="b" style="left:1663px;top:944px" width="18" height="17"><path d="M0.5 0.5H16.5V15.5H0.5Z" fill="#fff" stroke="#666"/><path d="M5.5 0.5V9.5M10.5 0.5V9.5H0.5" fill="none" stroke="#666"/></svg>
<div class="b" style="left:1704px;top:951px;width:10px;height:1px;background:#444;"></div>
<div class="b" style="left:1720px;top:952px;width:125px;height:1px;background:#444;"></div>
<div class="b" style="left:1780px;top:945px;width:6px;height:14px;background:#444;"></div>
<div class="b" style="left:1851px;top:951px;width:10px;height:1px;background:#444;"></div>
<div class="b" style="left:1855.5px;top:947px;width:1px;height:10px;background:#444;"></div>
<svg class="b" style="left:76px;top:943px" width="18" height="18"><path d="M2.5 5V15.5H15.5V2.5H8" fill="#fff" stroke="#5a5a5a"/><rect x="9" y="2" width="7" height="3.6" fill="#5a5a5a"/><circle cx="4.4" cy="4.4" r="3.4" fill="#5a5a5a"/><path d="M5 7.5H7M8 7.5H10M11 7.5H13M5 10.5H7M8 10.5H10M11 10.5H13M5 13.5H7M8 13.5H10M11 13.5H13" stroke="#5a5a5a"/></svg>
<svg class="b" style="left:114px;top:942px" width="24" height="22"><path d="M8.2 3.3A7.4 7.4 0 0 0 8.7 17.9" fill="none" stroke="#505050" stroke-width="1.4" stroke-dasharray="3 1.5"/><path d="M9.6 2V9M12.6 8.5H16" fill="none" stroke="#4a4a4a" stroke-width="1.2"/><path d="M7 7.6H12.2L9.6 11ZM15.4 5.9L18.2 8.5L15.4 11.1Z" fill="#4a4a4a"/><path d="M11.4 19.5L20.4 11.7" stroke="#3c3c3c" stroke-width="2.1"/><path d="M11.6 11.5L20.7 19.6" stroke="#3c3c3c" stroke-width="1.2"/></svg>
<svg class="b" style="left:1408px;top:942px" width="22" height="22"><rect x="1.2" y="1.1" width="18.6" height="12.7" rx="1.6" fill="#505050"/><path d="M5 18.9L6.2 17.4H9.6V18.9Z" fill="#505050"/><circle cx="14.6" cy="14.4" r="6.3" fill="#f3f3f3"/><circle cx="14.6" cy="14.4" r="4.1" fill="none" stroke="#505050" stroke-width="2.4" stroke-dasharray="2.1 1.12"/><circle cx="14.6" cy="14.4" r="2.9" fill="none" stroke="#505050" stroke-width="2.2"/></svg>
</body></html>
